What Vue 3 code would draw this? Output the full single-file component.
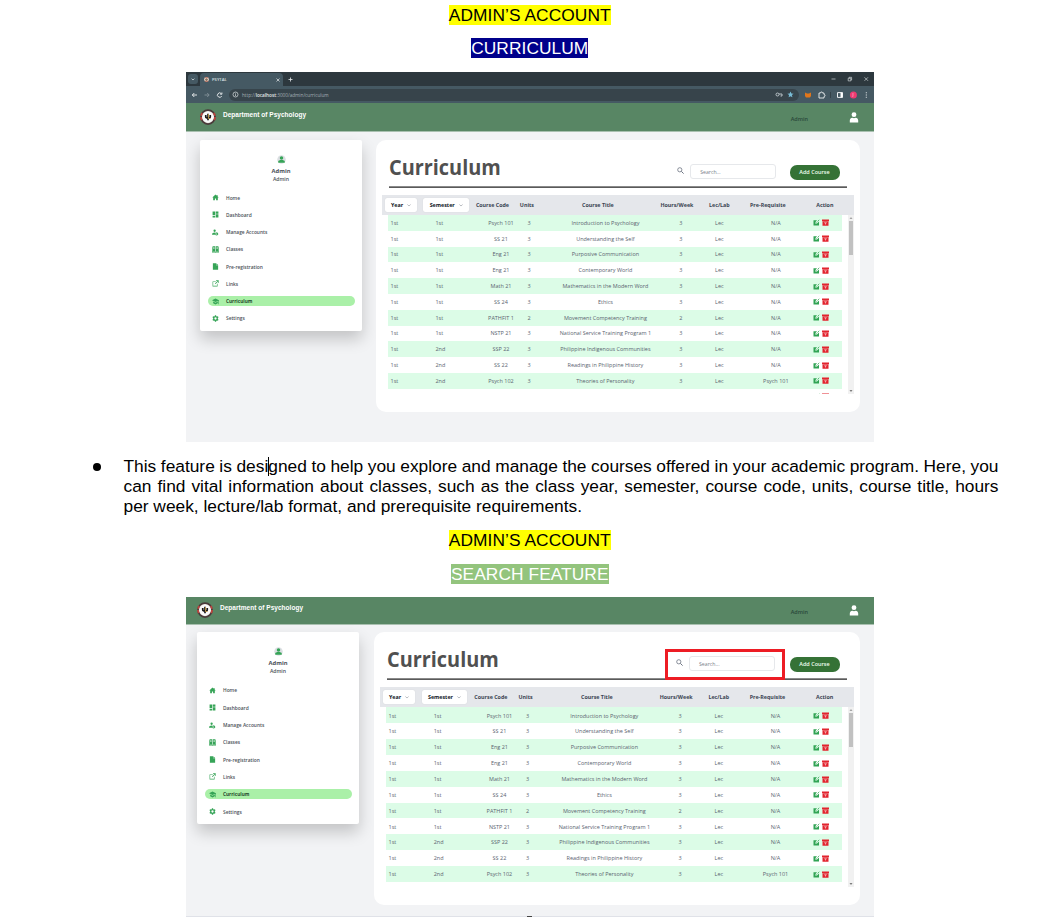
<script setup>
const menu = [
  { icon: 'home', label: 'Home' },
  { icon: 'dash', label: 'Dashboard' },
  { icon: 'users', label: 'Manage Accounts' },
  { icon: 'book', label: 'Classes' },
  { icon: 'file', label: 'Pre-registration' },
  { icon: 'link', label: 'Links' },
  { icon: 'cap', label: 'Curriculum', active: true },
  { icon: 'gear', label: 'Settings' },
]

const icons = {
  home: 'M12 2 1 12h3v9h6v-6h4v6h6v-9h3L19 8V3h-3v2.600z',
  dash: 'M2 2h9v12H2zM13 2h9v7h-9zM13 11h9v11h-9zM2 16h9v6H2z',
  users: 'M9 2a4 4 0 1 1 0 8 4 4 0 0 1 0-8zM0 20c0-5 4-8 9-8l3 .5c-2 2-2 5-1 7.500zM17 11l1 2 2-.5 1.500 2-1 2 1 2-1.500 2.500-2-.5-1 2h-2l-1-2-2 .5-1-2.500 1-2-1-2 1.500-2 2 .5 1-2zM16 15a2 2 0 1 0 0 4 2 2 0 0 0 0-4z',
  book: 'M2 1h9v17H2zM13 1h9v17h-9zM0 4h1v15h10l1 1 1-1h10V4h1v18H14l-2 1-2-1H0zM5 4v6l1.500-1L8 10V4zM16 4v6l1.500-1 1.500 1V4z',
  file: 'M3 1h11v7h7v15H3zM15 1l6 6h-6z',
  link: 'M2 5h11v2H4v13h13v-7h2v9H2zM14 1h9v9h-2V5l-9 9-2-2 9-9h-5z',
  cap: 'M12 2 0 8l12 6 10-5v12h2V8zM4 12v6l8 4 8-4v-6l-8 4z',
  gear: 'M10 1h4l.6 3 2.400 1.300L20 4l2.500 4-2.500 2v4l2.500 2L20 20l-3-1-2.400 1.300L14 23h-4l-.6-2.700L7 19l-3 1-2.500-4L4 14v-4L1.500 8 4 4l3 1.300L9.400 4zM12 8a4 4 0 1 0 0 8 4 4 0 0 0 0-8z',
}

const courses = [
  ['1st', '1st', 'Psych 101', 3, 'Introduction to Psychology', 3, 'Lec', 'N/A'],
  ['1st', '1st', 'SS 21', 3, 'Understanding the Self', 3, 'Lec', 'N/A'],
  ['1st', '1st', 'Eng 21', 3, 'Purposive Communication', 3, 'Lec', 'N/A'],
  ['1st', '1st', 'Eng 21', 3, 'Contemporary World', 3, 'Lec', 'N/A'],
  ['1st', '1st', 'Math 21', 3, 'Mathematics in the Modern Word', 3, 'Lec', 'N/A'],
  ['1st', '1st', 'SS 24', 3, 'Ethics', 3, 'Lec', 'N/A'],
  ['1st', '1st', 'PATHFIT 1', 2, 'Movement Competency Training', 2, 'Lec', 'N/A'],
  ['1st', '1st', 'NSTP 21', 3, 'National Service Training Program 1', 3, 'Lec', 'N/A'],
  ['1st', '2nd', 'SSP 22', 3, 'Philippine Indigenous Communities', 3, 'Lec', 'N/A'],
  ['1st', '2nd', 'SS 22', 3, 'Readings in Philippine History', 3, 'Lec', 'N/A'],
  ['1st', '2nd', 'Psych 102', 3, 'Theories of Personality', 3, 'Lec', 'Psych 101'],
  ['', '', '', '', '', '', '', ''],
]

const sections = [
  { id: 'curriculum', title: 'CURRICULUM', browser: true },
  { id: 'search', title: 'SEARCH FEATURE', browser: false },
]
</script>

<template>
  <main class="doc">
    <section v-for="s in sections" :key="s.id" :class="['section', s.id]">
      <h2 class="line"><span class="mark yellow">ADMIN’S ACCOUNT</span></h2>
      <h3 class="line"><span class="mark topic">{{ s.title }}</span></h3>

      <div class="shot">
        <div v-if="s.browser" class="chrome">
          <div class="tabs">
            <span class="tabmenu"><svg width="4" height="3" viewBox="0 0 4 3"><path d="M.6.7 2 2 3.400.7" fill="none" stroke="#dde3e6" stroke-width=".8" /></svg></span>
            <span class="tab">
              <svg width="5" height="5" viewBox="0 0 10 10"><circle cx="5" cy="5" r="4.800" fill="#efd9c8" /><path d="M2 1.500h6M2 8.500h6" stroke="#a4493c" stroke-width="1.500" /><path d="M5 2.500v5M3 4v2h4V4" fill="none" stroke="#4b3a2a" /></svg>
              <b>PSYTAL</b>
              <svg class="x" width="4" height="4" viewBox="0 0 4 4"><path d="m.5.5 3 3m0-3-3 3" stroke="#e6eaec" stroke-width=".7" /></svg>
            </span>
            <svg class="plus" width="5" height="5" viewBox="0 0 5 5"><path d="M2.500.5v4M.5 2.500h4" stroke="#e6eaec" stroke-width=".8" /></svg>
            <svg class="win" width="40" height="8" viewBox="0 0 40 8" fill="none" stroke="#cfd6d9" stroke-width=".7"><path d="M1.500 4h4M34.500 2.300l3.500 3.500m0-3.500-3.500 3.500" /><path d="M18.200 3.300h2.600v2.600h-2.600zM19 3.300v-1h2.600v2.700h-.8" /></svg>
          </div>
          <div class="toolbar">
            <svg class="nav" width="36" height="10" viewBox="0 0 36 10" fill="none" stroke="#f0f3f4" stroke-width=".9"><path d="M7 5H2.400M4.300 3 2.300 5l2 2" /><path d="M14.500 5H19M17.200 3l2 2-2 2" stroke="#83929a" /><path d="M31.300 3.600A2.200 2.200 0 1 0 31.700 6M31.900 2.500v1.700h-1.700" /></svg>
            <div class="url">
              <svg width="7" height="7" viewBox="0 0 7 7"><circle cx="3.500" cy="3.500" r="2.500" fill="none" stroke="#dbe1e4" stroke-width=".7" /><path d="M3.500 3.200V5M3.500 1.900v.7" stroke="#dbe1e4" stroke-width=".7" /></svg>
              <span>http://<b>localhost</b>:3000/admin/curriculum</span>
              <svg class="keys" width="22" height="9" viewBox="0 0 22 9"><circle cx="2.500" cy="4.500" r="1.500" fill="none" stroke="#c4cdd2" stroke-width=".9" /><path d="M4 4h3v2H5.500" fill="none" stroke="#c4cdd2" stroke-width=".9" /><path d="m15.500 1.500.9 2 2.200.2-1.700 1.400.5 2.200-1.900-1.100-1.900 1.100.5-2.200-1.700-1.400 2.200-.2z" fill="#79bcd6" /></svg>
            </div>
            <svg class="ext" width="72" height="12" viewBox="0 0 72 12"><path d="m4 3.500 2 1h2l2-1v3.500l-1 1.500H5L4 7z" fill="#e0761b" /><path d="M18 4h1.500a1 1 0 0 1 2 0H23v1.500a1 1 0 0 1 0 2V9h-5z" fill="none" stroke="#edf0f2" stroke-width=".9" /><path d="M29.500 3v6" stroke="#2f3b41" stroke-width=".8" /><path d="M36.500 3.600h5v4.800h-5z" fill="none" stroke="#edf0f2" /><path d="M39.500 3.600h2v4.800h-2z" fill="#fff" /><circle cx="52.400" cy="6" r="3.500" fill="#ef3a72" /><text x="51.600" y="7.400" fill="#fff" font-size="4">J</text><path d="M64.800 3.300h1v1h-1zM64.800 5.500h1v1h-1zM64.800 7.700h1v1h-1z" fill="#edf0f2" /></svg>
          </div>
        </div>

        <header class="appbar">
          <svg class="seal" width="16" height="16" viewBox="0 0 32 32">
            <circle cx="16" cy="16" r="14" fill="#ebe8e2" stroke="#4a3a3a" stroke-width="3.500" />
            <path d="M4.500 8A14 14 0 0 0 4.500 24M27.500 8A14 14 0 0 1 27.500 24" fill="none" stroke="#c0453f" stroke-width="3.500" stroke-dasharray="6 2.500" />
            <circle cx="16" cy="16" r="11" fill="#fafafa" />
            <path d="M16 9.500v13M11.500 12v3.500c0 3.500 9 3.500 9 0v-3.500" fill="none" stroke="#191919" stroke-width="3.400" />
            <path d="M17 10v9h4" fill="none" stroke="#c39a47" stroke-width="1.800" />
          </svg>
          <span class="dept">Department of Psychology</span>
          <span class="role">Admin</span>
          <svg class="person" width="10" height="11" viewBox="0 0 10 11" fill="#fff"><circle cx="5" cy="2.700" r="2.400" /><path d="M.8 10.500V8.600C.8 6.700 2 6 3.300 5.700c1 .6 2.400.6 3.400 0C8 6 9.200 6.700 9.200 8.600v1.900z" /></svg>
        </header>

        <div class="body">
          <aside class="side">
            <svg class="avatar" width="9" height="9" viewBox="0 0 18 18"><circle cx="9" cy="9" r="8.500" fill="#dcdfe3" /><circle cx="9" cy="6" r="3.500" fill="#36a457" /><path d="M2.500 15.500V13c0-2 3-3 6.500-3s6.500 1 6.500 3v2.500z" fill="#36a457" /></svg>
            <strong>Admin</strong>
            <small>Admin</small>
            <nav>
              <a v-for="m in menu" :key="m.label" :class="{ active: m.active }">
                <svg width="7" height="7" viewBox="0 0 24 24"><path :d="icons[m.icon]" fill-rule="evenodd" /></svg>
                <span>{{ m.label }}</span>
              </a>
            </nav>
          </aside>

          <article class="panel">
            <div class="head">
              <h1>Curriculum</h1>
              <div class="find">
                <svg width="7" height="7" viewBox="0 0 7 7" fill="none" stroke="#6b7280" stroke-width=".8"><circle cx="2.800" cy="2.800" r="2.100" /><path d="m4.400 4.400 2.200 2.200" stroke-width="1" /></svg>
                <span class="field">Search...</span>
              </div>
              <span class="add">Add Course</span>
            </div>
            <div class="thead">
              <span class="drop year"><b>Year</b><svg width="4" height="3" viewBox="0 0 4 3"><path d="M.4.500 2 2 3.600.5" fill="none" stroke="#8b9099" stroke-width=".6" /></svg></span>
              <i></i>
              <span class="drop"><b>Semester</b><svg width="4" height="3" viewBox="0 0 4 3"><path d="M.4.500 2 2 3.600.5" fill="none" stroke="#8b9099" stroke-width=".6" /></svg></span>
              <i></i>
              <b>Course Code</b><b>Units</b><b>Course Title</b><b>Hours/Week</b><b>Lec/Lab</b><b>Pre-Requisite</b><b>Action</b>
            </div>
            <div class="scroller">
              <div class="rows">
                <div v-for="(c, i) in courses" :key="i" :class="['row', { tint: i % 2 === 0 }]">
                  <span v-for="(v, j) in c" :key="j">{{ v }}</span>
                  <span class="acts">
                    <svg width="7" height="7" viewBox="0 0 14 14"><path d="M1 2.500h7L5 6v3h3l4-4v8H1z" fill="#31a354" /><path d="m6 8 6.500-6.500" stroke="#31a354" stroke-width="1.500" /><path d="M5.300 8.800 10 4" stroke="#e9fbee" stroke-width="1" /></svg>
                    <svg width="7" height="7" viewBox="0 0 14 14"><path d="M0 1h14v3.500H0zM1 5h12v8.500H1z" fill="#e2242f" /><path d="M4.500 7.500h5M7 8v3" stroke="#fff" stroke-width="1.100" /></svg>
                  </span>
                </div>
              </div>
              <div class="bar">
                <svg width="6" height="6" viewBox="0 0 6 6"><path d="M1.500 3.800 3 2.200l1.500 1.600z" fill="#8a8a8a" /></svg>
                <span></span>
                <svg class="down" width="6" height="6" viewBox="0 0 6 6"><path d="M1.500 2.200 3 3.800l1.500-1.600z" fill="#555" /></svg>
              </div>
            </div>
          </article>
        </div>
      </div>

      <ul v-if="s.browser" class="note">
        <li>
          <span class="dot"></span>
          <p>
            <span>This feature is designed to help you explore and manage the courses offered in your academic program. Here, you</span>
            <span>can find vital information about classes, such as the class year, semester, course code, units, course title, hours</span>
            <span class="last">per week, lecture/lab format, and prerequisite requirements.</span>
          </p>
        </li>
      </ul>
    </section>
  </main>
</template>

<style>
body { background: #fff; }
</style>

<style scoped>
* { box-sizing: border-box; }
.doc { width: 1057px; height: 921px; overflow: hidden; font-family: "Liberation Sans", Arial, sans-serif; color: #000; }
.line { margin: 0; width: 1059.500px; height: 20px; display: flex; justify-content: center; font-size: 17.330px; line-height: 20px; font-weight: 400; white-space: nowrap; letter-spacing: .07px; }
.mark { height: 20px; }
.yellow { background: #ff0; }
.topic { color: #fff; background: #00008b; }
.search .topic { background: #93c47d; }
.section.curriculum { height: 530px; padding-top: 5px; }
h3.line { margin-top: 13px; }
.search h3.line { margin-top: 14px; }

.shot { position: relative; width: 688px; height: 370px; margin: 14px 0 0 186px; background: #f2f3f5; font-family: "Open Sans", "Noto Sans", sans-serif; font-size: 5.400px; white-space: nowrap; overflow: hidden; }
.search .shot { height: 320px; margin-top: 13px; box-shadow: inset 0 -1px #e0e2e8; }
.search .shot::after { content: ""; position: absolute; left: 341px; bottom: 0; width: 5px; height: 1px; background: #444; }
svg { display: block; flex: none; }

.chrome { height: 31px; background: #455963; color: #dce2e5; }
.tabs { height: 14px; background: #2d383e; display: flex; align-items: center; }
.tabmenu { width: 10px; height: 10px; margin-left: 2px; border-radius: 3px; background: #455963; display: grid; place-items: center; }
.tab { width: 83px; height: 13px; margin: 1px 0 0 2px; padding: 0 3px 0 4px; border-radius: 4px 4px 0 0; background: #455963; display: flex; align-items: center; gap: 3px; font-size: 4.200px; }
.tab b { font-weight: 600; }
.x { margin-left: auto; }
.plus { margin-left: 5px; }
.win { margin-left: auto; margin-right: 4px; }
.toolbar { height: 17px; display: flex; align-items: center; }
.nav { margin-left: 4px; }
.url { width: 570px; height: 12px; margin-left: 3px; border-radius: 6px; background: #37444b; display: flex; align-items: center; padding-left: 2.500px; gap: 3.500px; font-size: 4.680px; color: #a5b0b6; }
.url b { color: #e2e7e9; font-weight: 600; }
.keys { margin-left: auto; margin-right: 2px; }
.ext { margin-left: 2px; font-family: "Open Sans", sans-serif; }

.appbar { height: 29px; padding: 0 14px; background: #588664; border-bottom: 1px solid #a9c0b0; display: flex; align-items: center; }
.search .appbar { height: 28px; padding-left: 11px; }
.search .seal, .search .person { margin-top: -1px; }
.dept { margin: -5px 0 0 7px; color: #fff; font: 700 6.500px/10px "Liberation Sans", Arial, sans-serif; letter-spacing: .03px; }
.role { margin: 4px 41px 0 auto; color: #29473a; font-weight: 600; font-size: 5.500px; }
.search .role { margin-top: 2px; }
.person { margin-right: 1px; }

.body { display: flex; align-items: flex-start; padding: 8px 14px; gap: 14px; }
.search .body { padding-left: 11px; padding-top: 7.400px; gap: 15px; }
.side { width: 162px; height: 190.500px; flex: none; border-radius: 2px; background: #fff; box-shadow: 0 8px 16px rgba(0, 0, 0, .2); display: flex; flex-direction: column; align-items: center; padding: 15px 7px 0; color: #4a5058; }
.search .side { height: 191.500px; }
.side strong { margin-top: 2.500px; font-size: 5.800px; line-height: 8px; font-weight: 700; }
.side small { font-size: 5.100px; line-height: 8px; font-weight: 600; }
nav { width: 147px; margin-top: 10px; display: flex; flex-direction: column; gap: 6.950px; }
.search nav { gap: 7.020px; margin-top: 10.400px; }
nav a { height: 10.300px; display: flex; align-items: center; gap: 7px; padding-left: 4.500px; border-radius: 5px; font-size: 4.850px; font-weight: 600; }
nav a svg { fill: #36a457; }
nav a.active { background: #aaf0a8; color: #25492c; font-size: 4.700px; font-weight: 700; }

.panel { flex: 1; min-width: 0; height: 271.500px; border-radius: 10px; background: #fff; }
.search .panel { height: 273px; }
.head { height: 48px; margin: 0 13.500px 0 13px; background: linear-gradient(#8a8a8a, #8a8a8a) 0 46px / 100% 1px no-repeat, linear-gradient(#5a5a5a, #5a5a5a) 0 47px / 100% 1px no-repeat; display: flex; align-items: flex-start; padding-top: 24.500px; }
h1 { margin: -15px 0 0; width: 286.200px; font-size: 21.500px; line-height: 34px; font-weight: 700; color: #505050; transform: scaleX(.925); transform-origin: left; }
.search h1 { width: 287px; }
.find { display: flex; width: 103px; margin-left: 2px; gap: 6px; padding-top: 2.500px; }
.field { width: 86px; height: 15px; margin-top: -3px; border: 1px solid #e6e8eb; border-radius: 3px; padding-left: 9px; line-height: 14px; color: #7a808a; font-size: 5.200px; }
.add { width: 50px; height: 15px; margin-left: auto; margin-right: 7px; border-radius: 7px; background: #357236; color: #f2fff2; text-align: center; line-height: 15px; font-size: 5.500px; font-weight: 600; }
.search .find { position: relative; }
.search .find::before { content: ""; box-sizing: border-box; position: absolute; left: -11px; top: -7.500px; width: 120px; height: 31px; border: 3px solid #ed1c24; z-index: 1; }

.thead { height: 20px; margin: 7px 6.200px 0 6px; background: #e5e7eb; display: grid; grid-template-columns: 3fr 32fr 6.500fr 45.500fr 3fr 41fr 28fr 114fr 44fr 41fr 56fr 58fr; align-items: center; color: #3a4452; font-size: 5.350px; }
.thead > * { min-width: 0; text-align: center; }
.thead > b { display: flex; justify-content: center; }
.year { grid-column: 2; }
.drop { height: 14px; border-radius: 2px; background: #fff; display: flex; align-items: center; justify-content: center; gap: 4px; color: #111827; box-shadow: 0 0 1px rgba(0, 0, 0, .15); }
.scroller { display: flex; height: 179px; margin: 0 6.200px 0 12px; overflow: hidden; }
.search .scroller { height: 180px; }
.rows { flex: 1; margin-right: 6px; }
.row { height: 15.800px; display: grid; grid-template-columns: 46fr 42fr 50fr 17fr 125fr 26fr 51fr 62fr 35fr; align-items: center; text-align: center; color: #5a6370; font-size: 5.480px; line-height: 8px; }
.search .row { height: 15.860px; padding-top: .5px; }
.row > span { min-width: 0; display: flex; justify-content: center; }
.row > span:nth-child(1) { justify-content: flex-start; padding-left: 2.500px; }
.row > span:nth-child(2), .row > span:nth-child(4) { justify-content: flex-start; padding-left: 1.500px; }
.row > .acts { justify-content: flex-start; gap: 2px; padding-left: 6px; }
.tint { background: #dcfce7; }
.row:last-child { background: #fff; }
.bar { width: 6px; background: #f1f1f1; display: flex; flex-direction: column; align-items: center; }
.bar span { width: 4.500px; height: 34px; background: #c1c1c1; }
.down { margin-top: auto; }

.note { list-style: none; margin: 14px 0 0; padding: 0 59px 0 93px; }
.note li { position: relative; display: flex; align-items: flex-start; }
.note li::after { content: ""; position: absolute; left: 175px; top: 1px; width: 1px; height: 19px; background: #000; }
.dot { flex: none; width: 8px; height: 8px; margin: 7px 22.500px 0 0; border-radius: 50%; background: #000; }
.note p { flex: none; width: 875px; margin: 0; font-size: 17.330px; line-height: 20px; }
.note p span { display: block; white-space: nowrap; word-spacing: -2px; text-align: justify; text-align-last: justify; }
.note p .last { width: 458.500px; }
</style>
